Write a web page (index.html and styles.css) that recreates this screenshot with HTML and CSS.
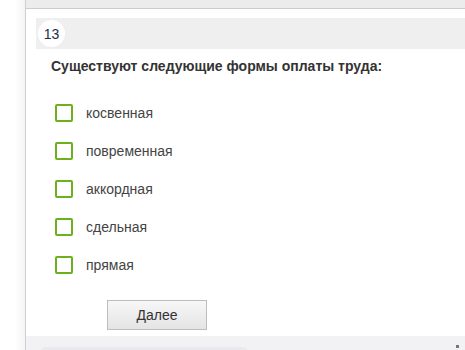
FILE: index.html
```html
<!DOCTYPE html>
<html lang="ru">
<head>
<meta charset="utf-8">
<link rel="stylesheet" href="styles.css">
</head>
<body>
<div class="page">
  <div class="side"></div>
  <div class="main">
    <div class="topbar"></div>
    <div class="content">
      <div class="qhead"><span class="num">13</span></div>
      <div class="question">Существуют следующие формы оплаты труда:</div>
      <ul class="options">
        <li class="opt"><span class="box"></span><span class="label">косвенная</span></li>
        <li class="opt"><span class="box"></span><span class="label">повременная</span></li>
        <li class="opt"><span class="box"></span><span class="label">аккордная</span></li>
        <li class="opt"><span class="box"></span><span class="label">сдельная</span></li>
        <li class="opt"><span class="box"></span><span class="label">прямая</span></li>
      </ul>
      <div class="actions"><button class="next">Далее</button></div>
    </div>
    <div class="footer"><div class="pill"></div><span class="dot"></span></div>
  </div>
</div>
</body>
</html>
```
FILE: styles.css
```css
* { box-sizing: border-box; }
html, body { margin: 0; padding: 0; background: #fff; }
body { font-family: Arial, "Liberation Sans", sans-serif; width: 465px; height: 350px; overflow: hidden; }
.page { display: flex; height: 350px; }
.side { width: 25px; flex: none; background: linear-gradient(to right, #fff 0, #fff 15px, #f4f4f4 25px); }
.main { flex: 1; border-left: 1px solid #cfcfcf; display: flex; flex-direction: column; }
.topbar { height: 9px; background: #ececec; border-bottom: 1px solid #cccccc; flex: none; }
.content { padding: 9px 0 0 10px; flex: none; }
.qhead { height: 31px; background: #efefef; display: flex; align-items: center; padding-left: 2px; }
.num { width: 27px; height: 27px; border-radius: 50%; background: #fff; display: flex; align-items: center; justify-content: center; font-size: 14px; color: #1d2a4a; }
.question { margin: 9px 0 0 15px; font-size: 14px; font-weight: bold; color: #333; line-height: 17px; }
.options { list-style: none; margin: 19px 0 0 19px; padding: 0; }
.opt { display: flex; align-items: center; height: 38px; }
.box { width: 18px; height: 18px; border: 2px solid #6cb01f; border-radius: 2px; flex: none; }
.label { margin-left: 13px; font-size: 14px; color: #444; }
.actions { padding: 16px 0 0 71px; height: 52px; }
.next { width: 100px; height: 30px; border: 1px solid #bdbdbd; background: linear-gradient(#f7f7f7, #e4e4e4); font-family: Arial, "Liberation Sans", sans-serif; font-size: 14px; color: #333; padding: 0; }
.footer { flex: 1; background: #f2f2f4; position: relative; }
.pill { position: absolute; left: 15px; top: 11px; width: 207px; height: 10px; background: #eaeaee; border-radius: 5px; }
.dot { position: absolute; right: 6px; top: 9px; width: 3px; height: 3px; background: #777; }
```
